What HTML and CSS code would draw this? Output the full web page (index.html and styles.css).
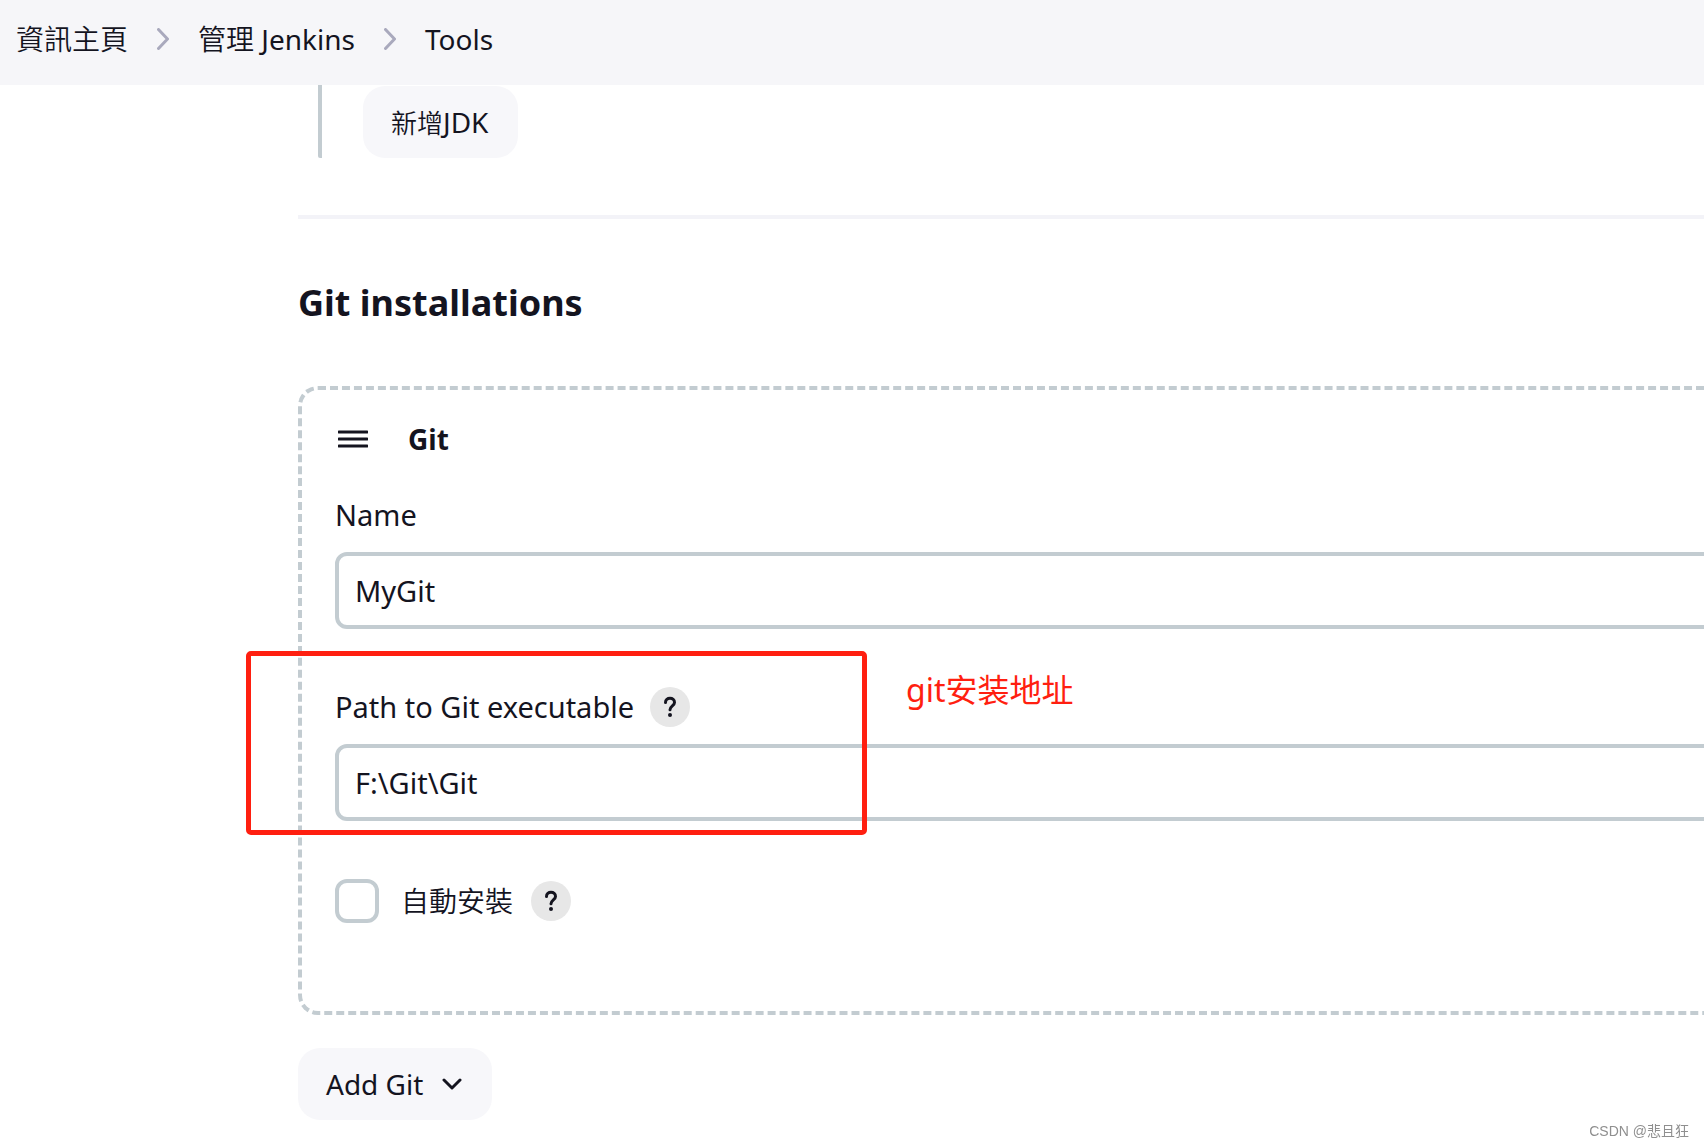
FILE: index.html
```html
<!DOCTYPE html>
<html lang="zh-Hant">
<head>
<meta charset="utf-8">
<meta name="viewport" content="width=device-width, initial-scale=1">
<title>Tools - Jenkins</title>
<link rel="stylesheet" href="styles.css">
</head>
<body>
<nav class="breadcrumbs" aria-label="Breadcrumb">
  <a href="#" class="crumb"><span class="han">資訊主頁</span></a>
  <svg class="crumb-arrow" viewBox="0 0 12 22" aria-hidden="true"><path d="M1.5 1.5 10.5 11 1.5 20.5"/></svg>
  <a href="#" class="crumb"><span class="han">管理</span> Jenkins</a>
  <svg class="crumb-arrow" viewBox="0 0 12 22" aria-hidden="true"><path d="M1.5 1.5 10.5 11 1.5 20.5"/></svg>
  <a href="#" class="crumb">Tools</a>
</nav>
<main class="tools">
  <div class="jdk">
    <button type="button" class="btn"><span><span class="han">新增</span>JDK</span></button>
  </div>
  <hr class="divider">
  <h2 class="section-title">Git installations</h2>
  <section class="tool-card">
    <header class="card-head">
      <svg class="drag-handle" viewBox="0 0 30 20" aria-hidden="true"><path d="M1 3h28M1 10h28M1 17h28"/></svg>
      <h3 class="card-title">Git</h3>
    </header>
    <div class="field">
      <div class="field-head"><label for="name">Name</label></div>
      <input class="text-input" id="name" type="text" value="MyGit">
    </div>
    <div class="field">
      <div class="field-head">
        <label for="path">Path to Git executable</label>
        <button type="button" class="help" aria-label="Help"><svg viewBox="0 0 40 40" aria-hidden="true"><path d="M15.500 15.500c0-2.700 2-4.200 4.500-4.200s4.500 1.600 4.500 4.100c0 3.400-4.500 3.600-4.500 7.400"/><circle cx="20" cy="28" r="2"/></svg></button>
      </div>
      <input class="text-input" id="path" type="text" value="F:\Git\Git">
      <div class="highlight"></div>
      <p class="note" lang="zh-Hans">git安装地址</p>
    </div>
    <div class="check-row">
      <input class="checkbox" id="auto" type="checkbox">
      <label for="auto" class="han">自動安裝</label>
      <button type="button" class="help" aria-label="Help"><svg viewBox="0 0 40 40" aria-hidden="true"><path d="M15.500 15.500c0-2.700 2-4.200 4.500-4.200s4.500 1.600 4.500 4.100c0 3.400-4.500 3.600-4.500 7.400"/><circle cx="20" cy="28" r="2"/></svg></button>
    </div>
  </section>
  <button type="button" class="btn btn-add">Add Git
    <svg class="btn-arrow" viewBox="0 0 20 12" aria-hidden="true"><path d="M2 2l8 8 8-8"/></svg>
  </button>
</main>
<p class="watermark" lang="zh-Hans">CSDN @悲且狂</p>
</body>
</html>
```

FILE: styles.css
```css
* {
  box-sizing: border-box;
}

body {
  margin: 0;
  overflow-x: hidden;
  background: #fff;
  color: #14141f;
  font: 28px/40px "Noto Sans", "Noto Sans CJK TC", sans-serif;
}

button,
input {
  margin: 0;
  color: inherit;
  font: inherit;
}

h2,
h3,
p {
  margin: 0;
}

.han {
  font-weight: 350;
}

.breadcrumbs {
  display: flex;
  align-items: center;
  gap: 29px;
  height: 85px;
  padding: 0 16px 8px;
  background: #f6f6f9;
}

.crumb {
  color: inherit;
  text-decoration: none;
  white-space: nowrap;
}

.crumb-arrow {
  width: 12px;
  height: 22px;
  fill: none;
  stroke: #a9a9bd;
  stroke-width: 3;
  stroke-linecap: round;
  stroke-linejoin: round;
}

.tools {
  padding-left: 298px;
}

.jdk {
  margin-left: 20px;
  padding: 1px 0 0 41px;
  border-left: 4px solid #c3ccd1;
  border-radius: 0 0 2px 2px;
}

.btn {
  display: flex;
  align-items: center;
  gap: 19px;
  height: 72px;
  padding: 0 30px 0 28px;
  border: 0;
  border-radius: 22px;
  background: #f7f7fa;
}

.btn .han {
  font-size: 26px;
}

.divider {
  height: 4px;
  margin: 57px 0 0;
  border: 0;
  background: #f3f3f8;
}

.section-title {
  margin: 60px 0 59px;
  font-size: 36px;
  line-height: 48px;
}

.tool-card {
  margin-right: -80px;
  padding: 29px 34px 88px 33px;
  border: 4px dashed #c3ccd1;
  border-radius: 20px;
}

.card-head {
  display: flex;
  align-items: center;
  gap: 40px;
  margin-bottom: 36px;
  padding-left: 3px;
}

.drag-handle {
  width: 30px;
  height: 20px;
  fill: none;
  stroke: #14141f;
  stroke-width: 3;
  stroke-linecap: round;
}

.card-title {
  font-size: 28px;
}

.field {
  position: relative;
  margin-bottom: 58px;
  font-size: 29px;
}

.field-head {
  display: flex;
  align-items: center;
  gap: 16px;
  margin-bottom: 17px;
}

.text-input {
  display: block;
  width: 100%;
  height: 77px;
  padding: 0 16px;
  border: 4px solid #c3ccd1;
  border-radius: 12px;
  background: #fff;
}

.help {
  width: 40px;
  height: 40px;
  padding: 0;
  border: 0;
  border-radius: 50%;
  background: #e7e7e7;
}

.help svg {
  display: block;
  fill: none;
  stroke: #14141f;
  stroke-width: 3;
  stroke-linecap: round;
}

.help circle {
  fill: #14141f;
  stroke: none;
}

.highlight {
  position: absolute;
  top: -36px;
  left: -89px;
  width: 621px;
  height: 184px;
  border: 5px solid #ff1f10;
  border-radius: 5px;
  pointer-events: none;
}

.note {
  position: absolute;
  top: -17px;
  left: 571px;
  color: #ff1f10;
  font-family: "Noto Sans", "Noto Sans CJK SC", sans-serif;
  font-size: 32px;
}

.check-row {
  display: flex;
  align-items: center;
  gap: 18px;
}

.checkbox {
  appearance: none;
  width: 44px;
  height: 44px;
  margin-right: 4px;
  border: 4px solid #c3ccd1;
  border-radius: 12px;
}

.btn-add {
  margin: 33px 0 26px;
}

.btn-arrow {
  width: 20px;
  height: 12px;
  fill: none;
  stroke: #14141f;
  stroke-width: 3;
  stroke-linecap: round;
  stroke-linejoin: round;
}

.watermark {
  position: fixed;
  right: 15px;
  bottom: 5px;
  color: #8f8f8f;
  font: 14px/20px "Liberation Sans", "Noto Sans CJK SC", sans-serif;
}
```
